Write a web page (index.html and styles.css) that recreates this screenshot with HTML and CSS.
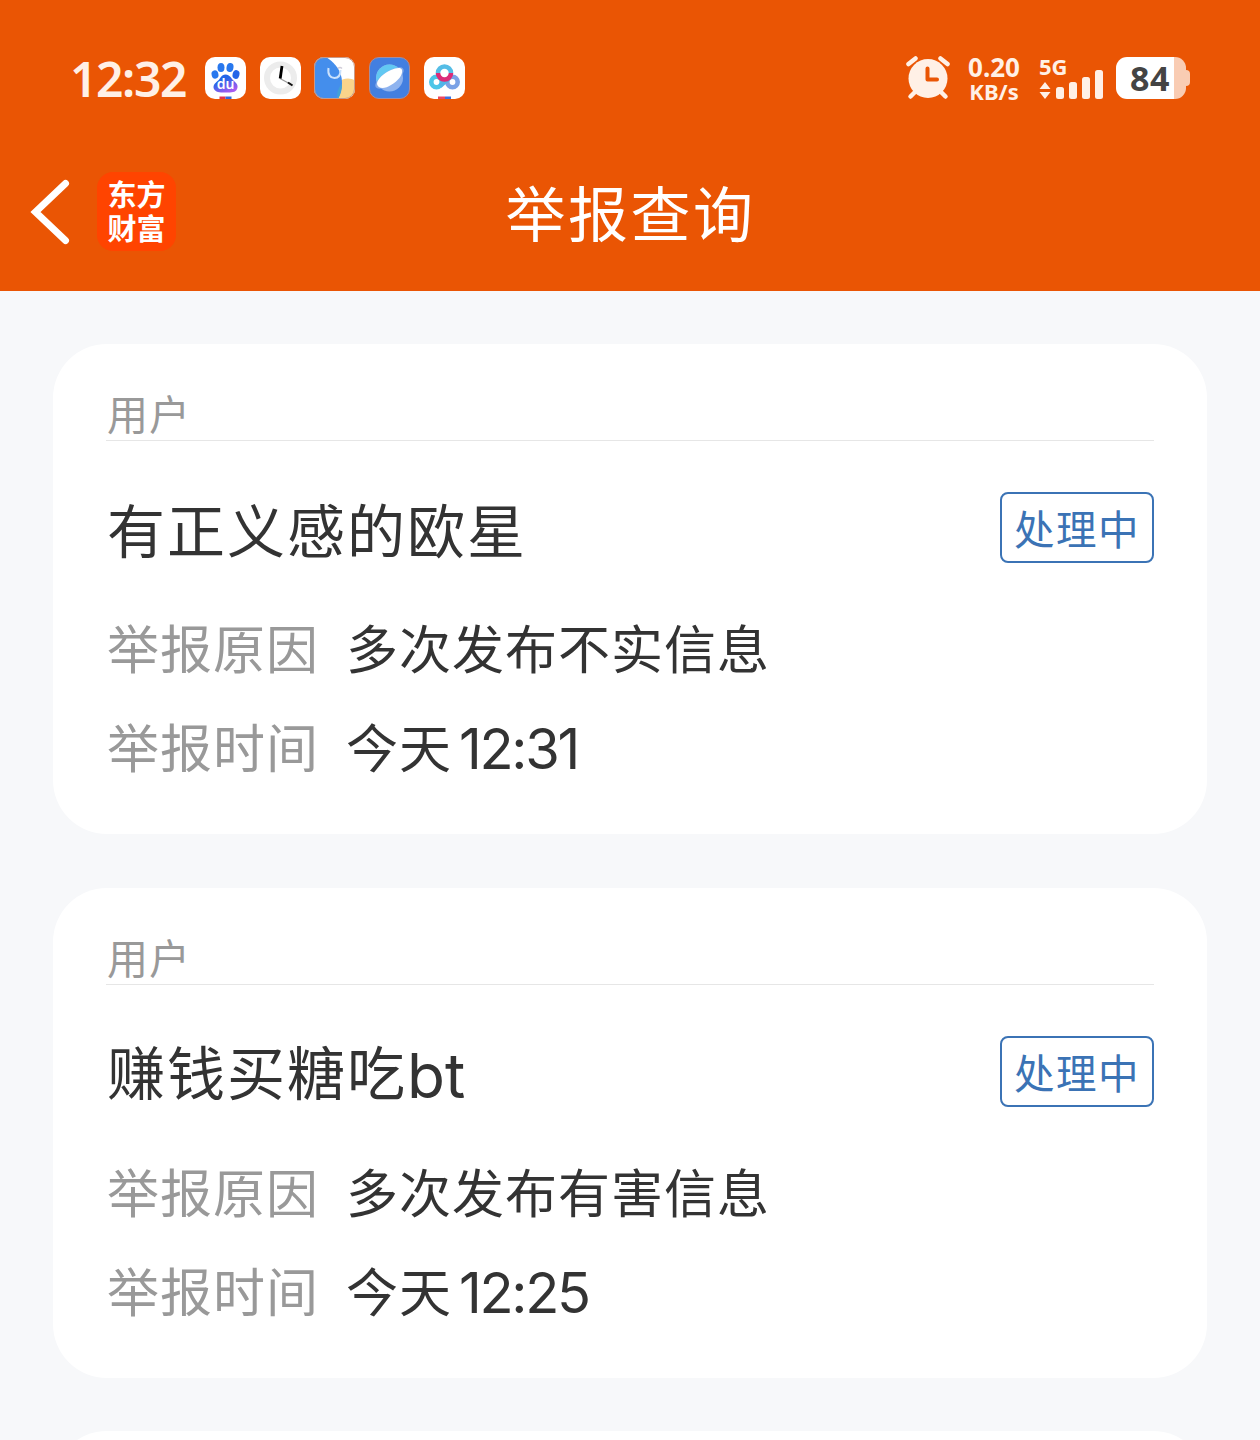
FILE: index.html
```html
<!DOCTYPE html>
<html lang="zh-CN">
<head>
    <meta charset="UTF-8">
    <meta name="viewport" content="width=device-width, initial-scale=1.0">
    <title>举报查询</title>
    <link rel="stylesheet" href="styles.css">
</head>
<body>
    <header class="header">
        <div class="status-bar">
            <div class="status-left">
                <span class="clock">12:32</span>
                <div class="app-icons">
                    <svg class="app-icon" viewBox="0 0 41 42">
                        <defs>
                            <linearGradient id="paw" x1="0" y1="0" x2="0.6" y2="1">
                                <stop offset="0.4" stop-color="#2466e8"/>
                                <stop offset="1" stop-color="#a65af0"/>
                            </linearGradient>
                        </defs>
                        <rect width="41" height="42" rx="10" fill="#fff"/>
                        <ellipse cx="16" cy="10.500" rx="3.500" ry="4.500" fill="#2878ee"/>
                        <ellipse cx="25" cy="10.500" rx="3.500" ry="4.500" fill="#2878ee" transform="rotate(10 25 10.500)"/>
                        <ellipse cx="10" cy="17.500" rx="3.400" ry="4.200" fill="#2878ee" transform="rotate(-15 10 17.500)"/>
                        <ellipse cx="31" cy="17.500" rx="3.400" ry="4.400" fill="#2466e8" transform="rotate(15 31 17.500)"/>
                        <path d="M20.500 17.500c4.500 0 5.500 4 8.500 6.500 3 2.500 4.500 5 3 8-1.500 3.500-5 3.500-11.500 3.500s-10-.5-11.500-3.500c-1.300-3 .5-5.500 3.500-8 3-2 3.500-6.500 8-6.500z" fill="url(#paw)"/>
                        <text x="20.500" y="32" class="paw-text">du</text>
                        <path d="M14.500 39.500h6V42h-6z" fill="#e3344b"/>
                        <path d="M20.500 39.500h6V42h-6z" fill="#3467d8"/>
                    </svg>
                    <svg class="app-icon" viewBox="0 0 41 42">
                        <rect width="41" height="42" rx="10" fill="#fff"/>
                        <circle cx="20.500" cy="21" r="13.500" fill="none" stroke="#ececec" stroke-width="6"/>
                        <path d="M20 21.500l12 6.500" stroke="#999" stroke-width="1.200"/>
                        <path d="M28 25.500l4.500 3" stroke="#111" stroke-width="2"/>
                        <path d="M20.200 21.500L22 9" stroke="#000" stroke-width="2.800"/>
                    </svg>
                    <svg class="app-icon" viewBox="0 0 41 42">
                        <defs><clipPath id="tile"><rect width="41" height="42" rx="10"/></clipPath></defs>
                        <g clip-path="url(#tile)">
                            <rect width="41" height="42" fill="#fff"/>
                            <circle cx="34" cy="36" r="14.500" fill="#fad48a"/>
                            <path d="M0 0h12c16 10 20 25 12 42H0z" fill="#448eec"/>
                            <path d="M28 27c0 5-1 10-4 15h-1c0-6 1-12 5-15z" fill="#43a2d8"/>
                            <path d="M14.500 11c-1 7 2 10 6 10s6-3 6-8" fill="none" stroke="#cbe2fc" stroke-width="2"/>
                            <path d="M24 11.500q2-2 4 0" fill="none" stroke="#d0ccd8" stroke-width="1.500"/>
                        </g>
                        <rect x=".5" y=".5" width="40" height="41" rx="9.500" fill="none" stroke="#c99a88"/>
                    </svg>
                    <svg class="app-icon" viewBox="0 0 41 42">
                        <rect x=".5" y=".5" width="40" height="41" rx="9.500" fill="#437fe0" stroke="#a78c9c"/>
                        <circle cx="20.500" cy="21" r="13.500" fill="#8eb3ef"/>
                        <path d="M7.500 24.500A13.500 13.500 0 0 1 31 12.500z" fill="#62c8f2"/>
                        <ellipse cx="20.500" cy="21" rx="16.500" ry="6.500" fill="#86abe9" transform="rotate(-34 20.500 21)"/>
                        <path d="M8 27c0-5 7-11 14-14 5-2 10-3 11 0 1 5-4 11-11 15-6 4-13 4-14-1z" fill="#fff"/>
                    </svg>
                    <svg class="app-icon" viewBox="0 0 41 42">
                        <rect width="41" height="42" rx="10" fill="#fff"/>
                        <g fill="none" stroke-width="4.600">
                            <circle cx="12.500" cy="25" r="5.200" stroke="#4cc6e8"/>
                            <circle cx="28.500" cy="25" r="5.200" stroke="#7aa2e6"/>
                            <path d="M16 29l9-8" stroke="#51b5e8"/>
                            <path d="M14 16a6.500 6.500 0 0 1 13 0" stroke="#55bde6"/>
                            <path d="M14 16a6.500 6.500 0 0 0 13 0" stroke="#dc2c78"/>
                        </g>
                        <path d="M14 39.500h7V42h-7z" fill="#ec4860"/>
                        <path d="M21 39.500h6V42h-6z" fill="#3d70dd"/>
                    </svg>
                </div>
            </div>
            <div class="status-right">
                <svg class="alarm" viewBox="0 0 44 44">
                    <path d="M9 36l-4.500 4.500M35 36l4.500 4.500" stroke="#fff0e6" stroke-width="4.500" stroke-linecap="round"/>
                    <path d="M2.500 8L9.500 2.500M34.500 2.500L41.500 8" stroke="#fff0e6" stroke-width="4.500" stroke-linecap="round"/>
                    <circle cx="22" cy="22.500" r="19.500" fill="#fff0e6"/>
                    <path d="M21.500 12.500v11h9.500" fill="none" stroke="#ea5504" stroke-width="4" stroke-linecap="round" stroke-linejoin="round"/>
                </svg>
                <div class="net-speed">
                    <span class="net-value">0.20</span>
                    <span class="net-unit">KB/s</span>
                </div>
                <div class="signal">
                    <span class="signal-type">5G</span>
                    <svg class="signal-bars" viewBox="0 0 64 30">
                        <g fill="#fff0e6">
                            <path d="M6 13l5.500 7H.5zM6 30l5.500-7H.5z"/>
                            <rect x="17" y="18" width="8" height="12" rx="2.500"/>
                            <rect x="30" y="13" width="8" height="17" rx="2.500"/>
                            <rect x="43" y="8" width="8" height="22" rx="2.500"/>
                            <rect x="56" y="1" width="8" height="29" rx="2.500"/>
                        </g>
                    </svg>
                </div>
                <div class="battery">
                    <div class="battery-body"><span class="battery-value">84</span></div>
                    <div class="battery-tip"></div>
                </div>
            </div>
        </div>
        <nav class="nav-bar">
            <div class="nav-side">
                <svg class="back" viewBox="0 0 40 66">
                    <path d="M35.500 4.500L5.500 33l30 28.500" fill="none" stroke="#fff" stroke-width="7" stroke-linecap="round"/>
                </svg>
                <div class="logo"><span>东方</span><span>财富</span></div>
            </div>
            <h1 class="nav-title">举报查询</h1>
            <div class="nav-side"></div>
        </nav>
    </header>

    <main class="list">
        <section class="card">
            <div class="card-type">用户</div>
            <div class="card-head">
                <h2 class="card-name">有正义感的欧星</h2>
                <span class="badge">处理中</span>
            </div>
            <div class="card-row">
                <span class="row-label">举报原因</span>
                <span class="row-value">多次发布不实信息</span>
            </div>
            <div class="card-row">
                <span class="row-label">举报时间</span>
                <span class="row-value">今天<span class="time">12:31</span></span>
            </div>
        </section>

        <section class="card">
            <div class="card-type">用户</div>
            <div class="card-head">
                <h2 class="card-name">赚钱买糖吃<span class="latin">bt</span></h2>
                <span class="badge">处理中</span>
            </div>
            <div class="card-row">
                <span class="row-label">举报原因</span>
                <span class="row-value">多次发布有害信息</span>
            </div>
            <div class="card-row">
                <span class="row-label">举报时间</span>
                <span class="row-value">今天<span class="time">12:25</span></span>
            </div>
        </section>

        <section class="card"></section>
    </main>
</body>
</html>
```

FILE: styles.css
```css
* {
    margin: 0;
    padding: 0;
    box-sizing: border-box;
}

body {
    height: 1440px;
    overflow: hidden;
    background: #f7f8fa;
    color: #333;
    font-family: "Noto Sans CJK SC", sans-serif;
}

.header {
    height: 291px;
    background: #ea5504;
    color: #fff;
}

/* status bar */
.status-bar {
    display: flex;
    justify-content: space-between;
    align-items: center;
    height: 156px;
    padding: 0 70px;
    color: #fff0e6;
    font-family: "Noto Sans", sans-serif;
    font-weight: 600;
}

.status-left,
.status-right,
.app-icons {
    display: flex;
    align-items: center;
}

.clock {
    width: 135px;
    padding-top: 2px;
    font-size: 48px;
    line-height: 56px;
    letter-spacing: -1.4px;
}

.app-icons {
    gap: 13.7px;
}

.app-icon {
    display: block;
    width: 41px;
    height: 42px;
}

.paw-text {
    fill: #fff;
    font: 600 14px "Noto Sans", sans-serif;
    text-anchor: middle;
}

.alarm {
    width: 44px;
    height: 44px;
    margin-right: 15px;
}

.net-speed {
    display: flex;
    flex-direction: column;
    align-items: center;
    width: 58px;
    margin-right: 16px;
    font-weight: 700;
}

.net-value {
    font-size: 26px;
    line-height: 25px;
}

.net-unit {
    font-size: 22px;
    line-height: 22px;
}

.signal {
    display: flex;
    flex-direction: column;
    width: 64px;
    margin-right: 13px;
}

.signal-type {
    font-size: 22px;
    font-weight: 700;
    line-height: 18px;
}

.signal-bars {
    width: 64px;
    height: 30px;
    margin-top: -6px;
}

.battery {
    display: flex;
    align-items: center;
}

.battery-body {
    display: flex;
    align-items: center;
    width: 70px;
    height: 42px;
    padding-left: 14px;
    border-radius: 11px;
    background: linear-gradient(90deg, #fff 58px, #f9ccb3 58px);
}

.battery-value {
    color: #444;
    font-size: 34px;
    font-weight: 700;
    line-height: 42px;
    letter-spacing: 0.5px;
}

.battery-tip {
    width: 4px;
    height: 16px;
    border-radius: 0 4px 4px 0;
    background: #f9ccb3;
}

/* title bar */
.nav-bar {
    display: flex;
    align-items: center;
    height: 111px;
    padding: 0 30px;
}

.nav-side {
    display: flex;
    flex: 1;
    align-items: center;
}

.back {
    width: 40px;
    height: 66px;
    margin-right: 27px;
}

.logo {
    display: flex;
    flex-direction: column;
    align-items: center;
    width: 79px;
    height: 79px;
    padding-top: 4px;
    border-radius: 16px;
    background: #ff4400;
    font-size: 29px;
    font-weight: 700;
    line-height: 34px;
}

.nav-title {
    padding: 0 0 1px 1px;
    font-size: 60px;
    font-weight: 400;
    line-height: 70px;
    letter-spacing: 2.5px;
}

/* report cards */
.list {
    display: flex;
    flex-direction: column;
    gap: 53.5px;
    height: 1149px;
    padding: 53.2px 53px 0;
    overflow: hidden;
}

.card {
    flex-shrink: 0;
    height: 490px;
    padding: 41px 53px 0;
    border-radius: 54px;
    background: #fff;
}

.card-type {
    height: 56px;
    padding-left: 1px;
    border-bottom: 1px solid #e6e6e6;
    color: #999;
    font-size: 41px;
    line-height: 55px;
    letter-spacing: 1px;
}

.card:empty {
    padding: 0;
}

.card-head {
    display: flex;
    justify-content: space-between;
    align-items: center;
    height: 71px;
    margin: 51px 0 54px;
}

.card-name {
    padding: 1px 0 0 1px;
    font-size: 58px;
    font-weight: 400;
    line-height: 71px;
    letter-spacing: 2px;
}

.latin {
    position: relative;
    top: 3px;
    font-family: Inter, sans-serif;
    font-size: 62px;
    letter-spacing: 0;
}

.badge {
    width: 154px;
    height: 71px;
    border: 2px solid #3b73b5;
    border-radius: 8px;
    color: #3b73b5;
    font-size: 40.5px;
    line-height: 68px;
    letter-spacing: 1.5px;
    text-align: center;
}

.card-row {
    display: flex;
    gap: 27px;
    height: 60px;
    margin-bottom: 39px;
    padding-left: 1px;
    font-size: 52px;
    line-height: 60px;
    letter-spacing: 1px;
}

.row-label {
    color: #999;
}

.time {
    position: relative;
    top: 1px;
    margin-left: 7px;
    font-family: Inter, sans-serif;
    font-size: 56px;
    letter-spacing: -2.3px;
}
```
